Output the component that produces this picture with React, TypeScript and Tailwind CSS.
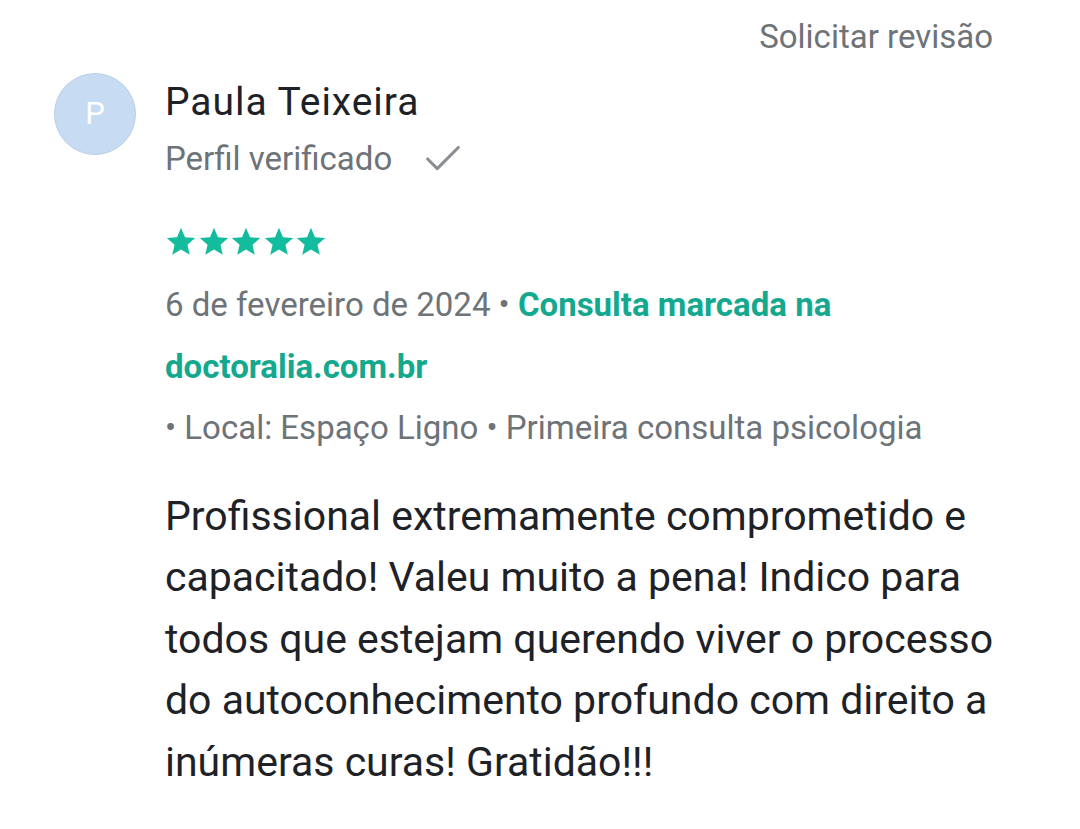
import { Check } from "lucide-react";

function Star() {
  return (
    <svg viewBox="0 0 24 24" className="-mr-[1.5px] h-[34px] w-[34px]" fill="#13bc9d">
      <path d="M12 17.27L18.18 21l-1.64-7.03L22 9.24l-7.19-.61L12 2 9.19 8.63 2 9.24l5.46 4.73L5.82 21z" />
    </svg>
  );
}

export default function App() {
  return (
    <div className="min-h-screen w-full bg-white font-['Roboto',sans-serif]">
      <div className="flex justify-end pr-[87px] pt-[16px]">
        <span className="text-[33px] leading-[42px] text-[#6e7378]">Solicitar revisão</span>
      </div>

      <div className="flex items-start pl-[54px] pt-[15px]">
        <div className="flex h-[82px] w-[82px] shrink-0 items-center justify-center rounded-full border border-[#b9cfea] bg-[#c7dbf3]">
          <span className="text-[31px] text-white">P</span>
        </div>

        <div className="ml-[29px] flex flex-col">
          <h2 className="mt-[7px] text-[39px] leading-[44px] tracking-[0.95px] text-[#1e2227]">
            Paula Teixeira
          </h2>
          <div className="mt-[12px] flex items-center">
            <span className="text-[33px] leading-[40px] text-[#6e7378]">Perfil verificado</span>
            <Check className="ml-[28px] text-[#8a8d91]" size={46} strokeWidth={1.6} />
          </div>

          <div className="-ml-[1px] mt-[42.5px] flex">
            <Star />
            <Star />
            <Star />
            <Star />
            <Star />
          </div>

          <div className="mt-[15.5px] w-[850px] text-[33px] leading-[61.5px] text-[#6e7378]">
            <div>
              6 de fevereiro de 2024 •{" "}
              <span className="font-bold text-[#14a98e]">Consulta marcada na</span>
            </div>
            <div className="font-bold text-[#14a98e]">doctoralia.com.br</div>
            <div>• Local: Espaço Ligno • Primeira consulta psicologia</div>
          </div>

          <p className="mt-[27px] w-[850px] text-[41px] leading-[61.5px] text-[#1e2227]">
            Profissional extremamente comprometido e capacitado! Valeu muito a pena! Indico para
            todos que estejam querendo viver o processo do autoconhecimento profundo com direito a
            inúmeras curas! Gratidão!!!
          </p>
        </div>
      </div>
    </div>
  );
}
